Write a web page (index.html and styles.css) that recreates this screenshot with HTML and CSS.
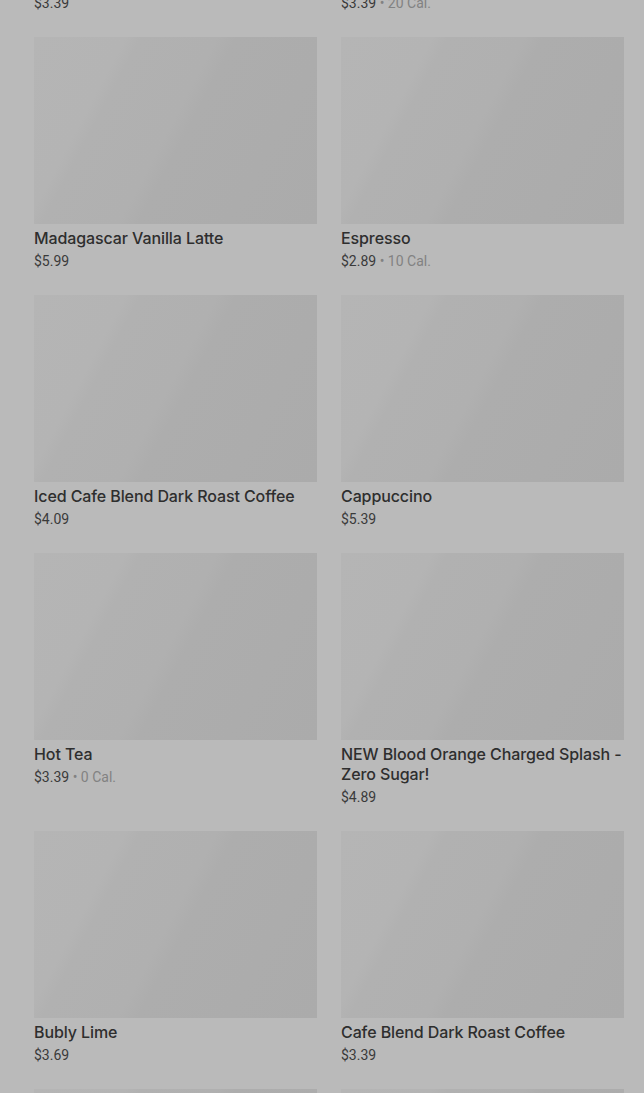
FILE: index.html
```html
<!DOCTYPE html>
<html lang="en">
<head>
<meta charset="utf-8">
<title>Menu</title>
<link rel="stylesheet" href="styles.css">
</head>
<body>
<main class="grid">
  <article class="card">
    <div class="thumb"></div>
    <h3 class="name">Iced Tea</h3>
    <p class="meta"><span class="price">$3.39</span></p>
  </article>
  <article class="card">
    <div class="thumb"></div>
    <h3 class="name">Caffe Americano</h3>
    <p class="meta"><span class="price">$3.39</span><span class="cal"> • 20 Cal.</span></p>
  </article>
  <article class="card">
    <div class="thumb"></div>
    <h3 class="name">Madagascar Vanilla Latte</h3>
    <p class="meta"><span class="price">$5.99</span></p>
  </article>
  <article class="card">
    <div class="thumb"></div>
    <h3 class="name">Espresso</h3>
    <p class="meta"><span class="price">$2.89</span><span class="cal"> • 10 Cal.</span></p>
  </article>
  <article class="card">
    <div class="thumb"></div>
    <h3 class="name">Iced Cafe Blend Dark Roast Coffee</h3>
    <p class="meta"><span class="price">$4.09</span></p>
  </article>
  <article class="card">
    <div class="thumb"></div>
    <h3 class="name">Cappuccino</h3>
    <p class="meta"><span class="price">$5.39</span></p>
  </article>
  <article class="card">
    <div class="thumb"></div>
    <h3 class="name">Hot Tea</h3>
    <p class="meta"><span class="price">$3.39</span><span class="cal"> • 0 Cal.</span></p>
  </article>
  <article class="card">
    <div class="thumb"></div>
    <h3 class="name">NEW Blood Orange Charged Splash - Zero Sugar!</h3>
    <p class="meta"><span class="price">$4.89</span></p>
  </article>
  <article class="card">
    <div class="thumb"></div>
    <h3 class="name">Bubly Lime</h3>
    <p class="meta"><span class="price">$3.69</span></p>
  </article>
  <article class="card">
    <div class="thumb"></div>
    <h3 class="name">Cafe Blend Dark Roast Coffee</h3>
    <p class="meta"><span class="price">$3.39</span></p>
  </article>
  <article class="card">
    <div class="thumb"></div>
    <h3 class="name">Caramel Macchiato</h3>
    <p class="meta"><span class="price">$5.49</span></p>
  </article>
  <article class="card">
    <div class="thumb"></div>
    <h3 class="name">Chai Tea Latte</h3>
    <p class="meta"><span class="price">$4.99</span></p>
  </article>
</main>
</body>
</html>
```
FILE: styles.css
```css
html, body {
  margin: 0;
  padding: 0;
  background: #bababa;
  overflow: hidden;
}

body {
  font-family: Inter, Roboto, "Liberation Sans", sans-serif;
  color: #2f2f2f;
}

.grid {
  display: grid;
  grid-template-columns: 283px 283px;
  column-gap: 24px;
  row-gap: 24px;
  padding: 0 20px 0 34px;
  margin-top: -221px;
}

.card {
  margin: 0;
}

.thumb {
  height: 187px;
  background: linear-gradient(118deg,
    #b5b5b5 0%, #b4b4b4 24%,
    #b1b1b1 28%, #b0b0b0 48%,
    #adadad 53%, #ababab 100%);
}

.name {
  margin: 4px 0 0;
  font-size: 16px;
  line-height: 20px;
  font-weight: 500;
  color: #2e2e2e;
  letter-spacing: -0.1px;
}

.meta {
  margin: 3px 0 0;
  font-family: Roboto, "Liberation Sans", sans-serif;
  font-size: 14px;
  line-height: 20px;
}

.price {
  color: #3a3a3a;
}

.cal {
  color: #828282;
}
```
